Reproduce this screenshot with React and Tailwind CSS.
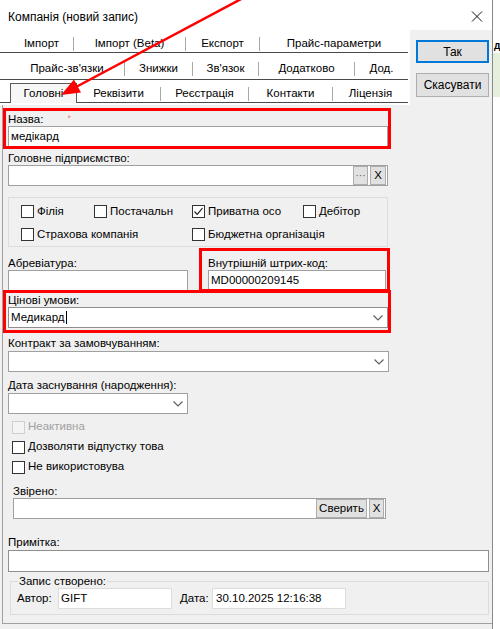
import React from "react";

function Chevron() {
  return (
    <svg width="10" height="6" viewBox="0 0 10 6" className="shrink-0">
      <polyline points="0.5,0.5 5,5 9.5,0.5" fill="none" stroke="#606060" strokeWidth="1.2" />
    </svg>
  );
}

function Sep() {
  return (
    <div className="h-[17px] flex items-center shrink-0">
      <div className="w-px h-[14px] bg-[#a8a8a8]" />
    </div>
  );
}

function Tab({ className, children }) {
  return (
    <div className={"h-[17px] flex items-center justify-center whitespace-nowrap shrink-0 " + className}>
      {children}
    </div>
  );
}

function Cb({ checked, disabled }) {
  return (
    <div
      className={
        disabled
          ? "w-[13px] h-[13px] border border-[#cfcfcf] bg-[#f4f4f4] shrink-0"
          : "w-[13px] h-[13px] border border-[#333333] bg-white shrink-0 flex items-center justify-center"
      }
    >
      {checked && (
        <svg width="11" height="11" viewBox="0 0 11 11">
          <polyline points="1.5,5.5 4.2,8.3 9.5,2.2" fill="none" stroke="#222" strokeWidth="1.2" />
        </svg>
      )}
    </div>
  );
}

function CbItem({ className, checked, children }) {
  return (
    <div className={"flex items-center gap-[3px] h-[15px] whitespace-nowrap shrink-0 " + className}>
      <Cb checked={checked} />
      <span>{children}</span>
    </div>
  );
}

function SmallBtn({ className, children }) {
  return (
    <div className={"h-[19px] bg-[#e1e1e1] border border-[#adadad] flex items-center justify-center shrink-0 " + className}>
      {children}
    </div>
  );
}

export default function App() {
  return (
    <div className="relative w-[500px] h-[629px] overflow-hidden bg-white flex text-black [font-family:'Liberation_Sans',Arial,sans-serif] text-[11.5px]">
      <div className="w-[493px] h-full flex flex-col border-r border-[#8a8a8a] shrink-0">
        {/* title bar */}
        <div className="h-[30px] shrink-0 flex items-center justify-between bg-white">
          <span className="pl-[8px] pt-[4px] text-[12px]">Компанія (новий запис)</span>
          <svg className="mr-[9px] mt-[3px]" width="12" height="11" viewBox="0 0 12 11">
            <path d="M1 0.5 L11 10.5 M11 0.5 L1 10.5" stroke="#111" strokeWidth="1" />
          </svg>
        </div>

        {/* tab headers + buttons */}
        <div className="h-[75px] shrink-0 flex">
          <div className="w-[410px] bg-white">
            <div className="w-[408px] h-[23px] flex items-end pl-[10px] border-b border-[#4a4a4a]">
              <Tab className="w-[63px]">Імпорт</Tab>
              <Sep />
              <Tab className="w-[111px]">Імпорт (Beta)</Tab>
              <Sep />
              <Tab className="w-[73px]">Експорт</Tab>
              <Sep />
              <Tab className="flex-1">Прайс-параметри</Tab>
            </div>
            <div className="w-[408px] h-[27px] flex items-end pl-[10px] pb-[2px] border-b border-[#4a4a4a]">
              <Tab className="w-[114px]">Прайс-зв'язки</Tab>
              <Sep />
              <Tab className="w-[67px]">Знижки</Tab>
              <Sep />
              <Tab className="w-[65px]">Зв'язок</Tab>
              <Sep />
              <Tab className="w-[95px]">Додатково</Tab>
              <Sep />
              <Tab className="flex-1">Дод.</Tab>
            </div>
            <div className="w-[408px] h-[23px] flex items-end pl-[10px] border-b border-[#4a4a4a]">
              <div className="w-[67px] h-[20px] -mb-px bg-[#f7f7f7] border-t border-l border-r border-[#5a5a5a] flex items-center justify-center shrink-0">
                Головні
              </div>
              <Tab className="w-[83px]">Реквізити</Tab>
              <Sep />
              <Tab className="w-[87px]">Реєстрація</Tab>
              <Sep />
              <Tab className="w-[83px]">Контакти</Tab>
              <Sep />
              <Tab className="flex-1">Ліцензія</Tab>
            </div>
          </div>
          <div className="flex-1 bg-[#f0f0f0] flex flex-col pl-[6px] pt-[10px]">
            <div className="w-[73px] h-[23px] border-2 border-[#0078d7] bg-[#e1e1e1] flex items-center justify-center text-[12px]">
              Так
            </div>
            <div className="mt-[10px] w-[73px] h-[24px] border border-[#adadad] bg-[#e1e1e1] flex items-center justify-center text-[12px]">
              Скасувати
            </div>
          </div>
        </div>

        {/* content page */}
        <div className="flex-1 bg-[#f0f0f0]">
          <div className="ml-[2px] h-[519px] border-l border-b border-[#a0a0a0] pl-[5px] flex flex-col">
            {/* Назва */}
            <div className="mt-[7px] h-[14px] leading-[14px] flex">
              <span>Назва:</span>
              <span className="ml-[24px] -mt-[1px] text-[9px] text-[#f08080]">*</span>
            </div>
            <div className="h-[21px] w-[380px] bg-white border border-[#a0a0a0] flex items-center pl-[2px]">
              медікард
            </div>

            {/* Головне підприємство */}
            <div className="mt-[4px] h-[14px] leading-[14px]">Головне підприємство:</div>
            <div className="h-[21px] w-[380px] bg-white border border-[#a0a0a0] flex items-center justify-end gap-[2px] pr-px">
              <SmallBtn className="w-[15px] text-[10px] text-[#555]">···</SmallBtn>
              <SmallBtn className="w-[16px]">X</SmallBtn>
            </div>

            {/* checkbox group */}
            <div className="mt-[11px] h-[50px] w-[380px] border border-[#dcdcdc] pt-[6px] flex flex-col gap-[8px]">
              <div className="flex pl-[12px]">
                <CbItem className="w-[73px]">Філія</CbItem>
                <CbItem className="w-[98px]">Постачальн</CbItem>
                <CbItem className="w-[111px]" checked>Приватна осо</CbItem>
                <CbItem className="w-[70px]">Дебітор</CbItem>
              </div>
              <div className="flex pl-[12px]">
                <CbItem className="w-[171px]">Страхова компанія</CbItem>
                <CbItem className="w-[150px]">Бюджетна організація</CbItem>
              </div>
            </div>

            {/* Абревіатура + штрих-код */}
            <div className="mt-[9px] flex">
              <div className="w-[180px] flex flex-col">
                <div className="h-[14px] leading-[14px]">Абревіатура:</div>
                <div className="h-[21px] bg-white border border-[#a0a0a0]" />
              </div>
              <div className="ml-[20px] w-[178px] flex flex-col">
                <div className="h-[14px] leading-[14px]">Внутрішній штрих-код:</div>
                <div className="h-[21px] bg-white border border-[#a0a0a0] flex items-center pl-[2px]">
                  MD00000209145
                </div>
              </div>
            </div>

            {/* Цінові умови */}
            <div className="mt-[2px] h-[14px] leading-[14px]">Цінові умови:</div>
            <div className="h-[21px] w-[380px] bg-white border border-[#8f8f8f] flex items-center justify-between pl-[2px] pr-[4px]">
              <span className="flex items-center">
                Медикард<span className="inline-block w-px h-[13px] bg-black ml-px" />
              </span>
              <Chevron />
            </div>

            {/* Контракт */}
            <div className="mt-[8px] h-[14px] leading-[14px]">Контракт за замовчуванням:</div>
            <div className="mt-px h-[21px] w-[381px] bg-white border border-[#a0a0a0] flex items-center justify-end pr-[4px]">
              <Chevron />
            </div>

            {/* Дата */}
            <div className="mt-[6px] h-[14px] leading-[14px]">Дата заснування (народження):</div>
            <div className="mt-px h-[21px] w-[180px] bg-white border border-[#a0a0a0] flex items-center justify-end pr-[4px]">
              <Chevron />
            </div>

            {/* checkboxes */}
            <div className="mt-[3px] pl-[4px] flex flex-col">
              <div className="h-[20px] flex items-center gap-[3px] text-[#a0a0a0]">
                <Cb disabled />
                <span>Неактивна</span>
              </div>
              <div className="h-[20px] flex items-center gap-[3px]">
                <Cb />
                <span className="whitespace-nowrap">Дозволяти відпустку това</span>
              </div>
              <div className="h-[20px] flex items-center gap-[3px]">
                <Cb />
                <span className="whitespace-nowrap">Не використовува</span>
              </div>
            </div>

            {/* Звірено */}
            <div className="ml-[5px] mt-[7px] h-[14px] leading-[14px]">Звірено:</div>
            <div className="ml-[5px] h-[21px] w-[373px] bg-white border border-[#a0a0a0] flex items-center justify-end gap-[2px] pr-px">
              <SmallBtn className="w-[51px]">Сверить</SmallBtn>
              <SmallBtn className="w-[15px]">X</SmallBtn>
            </div>

            {/* Примітка */}
            <div className="mt-[16px] h-[14px] leading-[14px]">Примітка:</div>
            <div className="mt-px h-[22px] w-[481px] bg-white border border-[#8f8f8f]" />

            {/* Запис створено */}
            <fieldset className="ml-[2px] mt-[2px] w-[479px] border border-[#dcdcdc] px-[6px] pb-[5px]">
              <legend className="px-px ml-[1px] leading-[14px]">Запис створено:</legend>
              <div className="flex items-center">
                <span className="w-[41px]">Автор:</span>
                <div className="h-[21px] w-[114px] bg-white border border-[#dcdcdc] flex items-center pl-[2px]">GIFT</div>
                <span className="ml-[8px] w-[32px]">Дата:</span>
                <div className="h-[21px] w-[134px] bg-white border border-[#dcdcdc] flex items-center pl-[3px]">
                  30.10.2025 12:16:38
                </div>
              </div>
            </fieldset>
          </div>
        </div>
      </div>

      {/* strip of window behind */}
      <div className="flex-1 bg-white pt-[38px]">
        <div className="pl-px h-[15px] leading-[15px] font-bold text-[10px]">д</div>
        <div className="h-[44px] bg-[#e6efdc]" />
      </div>

      {/* annotation overlays */}
      <div className="absolute left-[3px] top-[108px] w-[388px] h-[41px] border-[3px] border-[#ff0000] pointer-events-none" />
      <div className="absolute left-[199px] top-[248px] w-[191px] h-[44px] border-[3px] border-[#ff0000] pointer-events-none" />
      <div className="absolute left-[3px] top-[290px] w-[388px] h-[43px] border-[3px] border-[#ff0000] pointer-events-none" />
      <svg className="absolute left-0 top-0 pointer-events-none" width="500" height="629" viewBox="0 0 500 629">
        <line x1="243" y1="-2" x2="76" y2="87" stroke="#ff0000" strokeWidth="2.5" />
        <polygon points="61,95 81,92.5 74,79.5" fill="#ff0000" />
      </svg>
    </div>
  );
}
